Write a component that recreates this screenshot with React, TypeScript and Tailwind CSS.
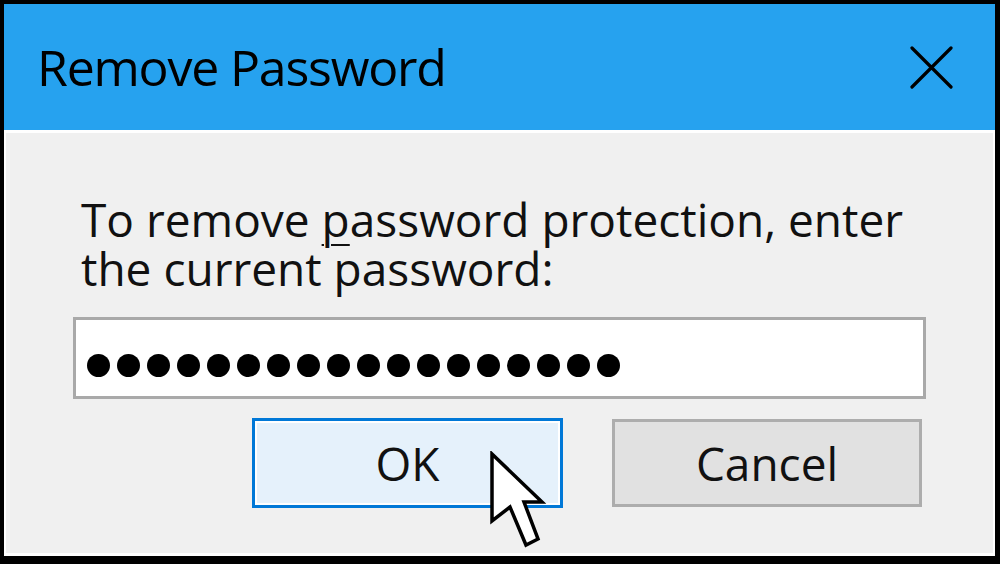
import React from 'react';

const dots = Array.from({ length: 18 });

const font = { fontFamily: '"Open Sans", "Noto Sans", sans-serif' };

export default function App() {
  return (
    <div className="w-[1000px] h-[564px] bg-black pt-[4px] pl-[4px] pr-[5px] pb-[8px] flex flex-col font-medium" style={font}>
      {/* Title bar */}
      <div className="h-[126px] shrink-0 bg-[#26a2ef] flex items-center justify-between pl-[33px] pr-[42px]">
        <span className="text-[50px] leading-none tracking-[-1.2px] text-black">Remove Password</span>
        <svg width="43" height="43" viewBox="0 0 43 43">
          <path d="M2 2 L41 41 M41 2 L2 41" stroke="#000" strokeWidth="3.2" strokeLinecap="round" />
        </svg>
      </div>

      {/* Body */}
      <div className="relative flex-1 bg-[#f0f0f0] border-t-[3px] border-x-2 border-b-[3px] border-white px-[67px] pt-[62px]">
        <p className="pl-[8px] text-[46px] leading-[49px] text-[#111]">
          To remove <span className="underline decoration-[2px] underline-offset-[7px]">p</span>assword protection, enter
          <br />
          the current password:
        </p>

        <div className="mt-[24px] h-[82px] bg-white border-[3px] border-[#a9a9a9] flex items-center gap-[7px] pl-[11px] pt-[14px]">
          {dots.map((_, i) => (
            <span key={i} className="w-[23px] h-[23px] rounded-full bg-black" />
          ))}
        </div>

        <div className="mt-[19px] flex justify-end gap-[49px] pr-[4px]">
          <div className="w-[311px] h-[90px] border-[3px] border-[#0078d7]">
            <div className="h-full border-2 border-white bg-[#e5f1fb] flex items-center justify-center text-[46px] text-[#111]">
              OK
            </div>
          </div>
          <div className="w-[310px] h-[88px] mt-[1px] border-[3px] border-[#adadad] bg-[#e1e1e1] flex items-center justify-center text-[46px] text-[#111]">
            Cancel
          </div>
        </div>

        {/* Mouse pointer */}
        <svg className="absolute left-[483px] top-[318px]" width="58" height="100" viewBox="0 0 58 100">
          <path
            d="M3 3 L3 70 L21 56 L37 94 L49 88 L35 51 L53 51 Z"
            fill="#fff"
            stroke="#000"
            strokeWidth="3.5"
            strokeLinejoin="miter"
          />
        </svg>
      </div>
    </div>
  );
}
